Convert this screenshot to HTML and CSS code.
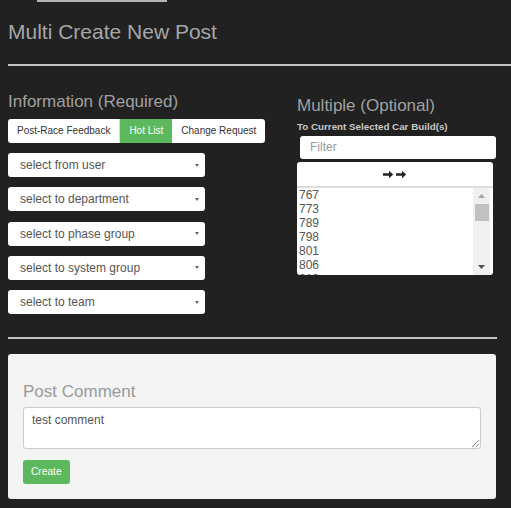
FILE: index.html
```html
<!DOCTYPE html>
<html>
<head>
<meta charset="utf-8">
<link rel="stylesheet" href="styles.css">
</head>
<body>
<div class="topbar"></div>
<div class="page">
  <h1 class="title">Multi Create New Post</h1>
  <div class="rule rule-wide"></div>
  <div class="cols">
    <div class="col-left">
      <h2 class="section sec-left">Information (Required)</h2>
      <div class="btn-group">
        <span class="seg">Post-Race Feedback</span>
        <span class="seg seg-active">Hot List</span>
        <span class="seg">Change Request</span>
      </div>
      <div class="selects">
        <div class="select"><span>select from user</span><i class="caret"></i></div>
        <div class="select"><span>select to department</span><i class="caret"></i></div>
        <div class="select"><span>select to phase group</span><i class="caret"></i></div>
        <div class="select"><span>select to system group</span><i class="caret"></i></div>
        <div class="select"><span>select to team</span><i class="caret"></i></div>
      </div>
    </div>
    <div class="col-right">
      <h2 class="section sec-right">Multiple (Optional)</h2>
      <div class="label">To Current Selected Car Build(s)</div>
      <div class="filter">Filter</div>
      <div class="move">
        <svg width="24" height="9" viewBox="0 0 24 9"><path d="M0 3.3h6V0.8l4.2 3.7-4.2 3.7V5.7H0z" fill="#222"/><path d="M13 3.3h6V0.8l4.2 3.7-4.2 3.7V5.7h-6z" fill="#222"/></svg>
      </div>
      <div class="list">
        <div class="items">
          <div>767</div><div>773</div><div>789</div><div>798</div><div>801</div><div>806</div><div class="partial">812</div>
        </div>
        <div class="scroll">
          <svg class="sarrow" width="7" height="4" viewBox="0 0 7 4"><path d="M0 4L3.5 0 7 4z" fill="#a3a3a3"/></svg>
          <div class="thumb"></div>
          <div class="track"></div>
          <svg class="sarrow" width="7" height="4" viewBox="0 0 7 4"><path d="M0 0h7L3.5 4z" fill="#505050"/></svg>
        </div>
      </div>
    </div>
  </div>
  <div class="rule rule-low"></div>
  <div class="panel">
    <h2 class="panel-title">Post Comment</h2>
    <div class="textarea">test comment
      <svg class="grip" width="8" height="8" viewBox="0 0 8 8"><path d="M8 1L1 8M8 5L5 8" stroke="#888" stroke-width="1"/></svg>
    </div>
    <span class="btn-create">Create</span>
  </div>
</div>
</body>
</html>
```
FILE: styles.css
```css
html, body {
  margin: 0;
  padding: 0;
  background: #212121;
  font-family: "Liberation Sans", Arial, sans-serif;
  overflow: hidden;
}
.topbar {
  height: 2px;
  width: 130px;
  margin-left: 37px;
  background: #b5b5b5;
}
.page {
  padding: 0 15px 0 8px;
}
.title {
  margin: 18px 0 0;
  font-size: 21px;
  line-height: 24px;
  font-weight: normal;
  color: #a6a6a6;
}
.rule {
  height: 2px;
  background: #c4c4c4;
}
.rule-wide {
  margin: 20px -15px 0 0;
}
.cols {
  display: flex;
}
.col-left {
  width: 289px;
  flex: none;
}
.col-right {
  width: 197px;
  flex: none;
}
.section {
  margin: 0;
  font-weight: normal;
  font-size: 17px;
  line-height: 20px;
  color: #a0a0a0;
}
.sec-left {
  margin-top: 26px;
}
.sec-right {
  margin-top: 30px;
}
.btn-group {
  display: flex;
  margin-top: 7px;
  width: max-content;
  background: #fff;
  border-radius: 3px;
  overflow: hidden;
}
.seg {
  height: 24px;
  line-height: 24px;
  font-size: 10px;
  color: #333;
  padding: 0 9px;
  border-right: 1px solid #ddd;
}
.seg:last-child { border-right: none; }
.seg-active {
  background: #5cb85c;
  color: #fff;
  border-right: none;
}
.selects {
  margin-top: 10px;
  display: flex;
  flex-direction: column;
  gap: 10.25px;
  width: 197px;
}
.select {
  height: 24px;
  background: #fff;
  border-radius: 3px;
  display: flex;
  align-items: center;
  justify-content: space-between;
  padding: 0 6px 0 12px;
  font-size: 12px;
  color: #555;
}
.caret {
  width: 0;
  height: 0;
  border-left: 2px solid transparent;
  border-right: 2px solid transparent;
  border-top: 3px solid #666;
}
.label {
  margin-top: 5px;
  font-size: 9.8px;
  font-weight: bold;
  color: #c8c8c8;
  line-height: 11px;
}
.filter {
  margin: 4px 0 0 3px;
  height: 23px;
  box-sizing: border-box;
  width: 196px;
  background: #fff;
  border-radius: 3px;
  font-size: 12px;
  color: #999;
  padding-left: 10px;
  line-height: 23px;
}
.move {
  margin-top: 3px;
  height: 24px;
  width: 196px;
  background: #fff;
  border-radius: 3px 3px 0 0;
  display: flex;
  align-items: center;
  justify-content: center;
}
.list {
  width: 196px;
  height: 89px;
  box-sizing: border-box;
  background: #fff;
  border-top: 2px solid #ddd;
  border-radius: 0 0 3px 3px;
  display: flex;
  overflow: hidden;
}
.items {
  flex: 1;
  padding: 0 0 0 2px;
  font-size: 12px;
  line-height: 14px;
  color: #555;
}
.scroll {
  width: 17px;
  margin-right: 3px;
  background: #f0f0f0;
  display: flex;
  flex-direction: column;
  align-items: center;
  padding: 6px 0 6px;
  box-sizing: border-box;
}
.thumb {
  margin-top: 6px;
  width: 14px;
  height: 17px;
  background: #c1c1c1;
}
.track { flex: 1; }
.rule-low {
  margin-top: 23px;
  width: 489px;
}
.panel {
  margin-top: 15px;
  width: 488px;
  height: 145px;
  box-sizing: border-box;
  background: #f4f4f4;
  border-radius: 3px;
  padding: 0 15px;
}
.panel-title {
  margin: 0;
  padding-top: 28px;
  font-size: 17px;
  line-height: 20px;
  font-weight: normal;
  color: #9a9a9a;
}
.textarea {
  position: relative;
  margin-top: 5px;
  height: 42px;
  box-sizing: border-box;
  background: #fff;
  border: 1px solid #ccc;
  border-radius: 3px;
  font-size: 12px;
  color: #555;
  padding: 5px 8px;
  line-height: 14px;
}
.grip {
  position: absolute;
  right: 1px;
  bottom: 1px;
}
.btn-create {
  display: inline-block;
  margin-top: 11px;
  height: 24px;
  line-height: 24px;
  padding: 0 8px;
  background: #5cb85c;
  color: #fff;
  font-size: 10.2px;
  border-radius: 3px;
}
```
